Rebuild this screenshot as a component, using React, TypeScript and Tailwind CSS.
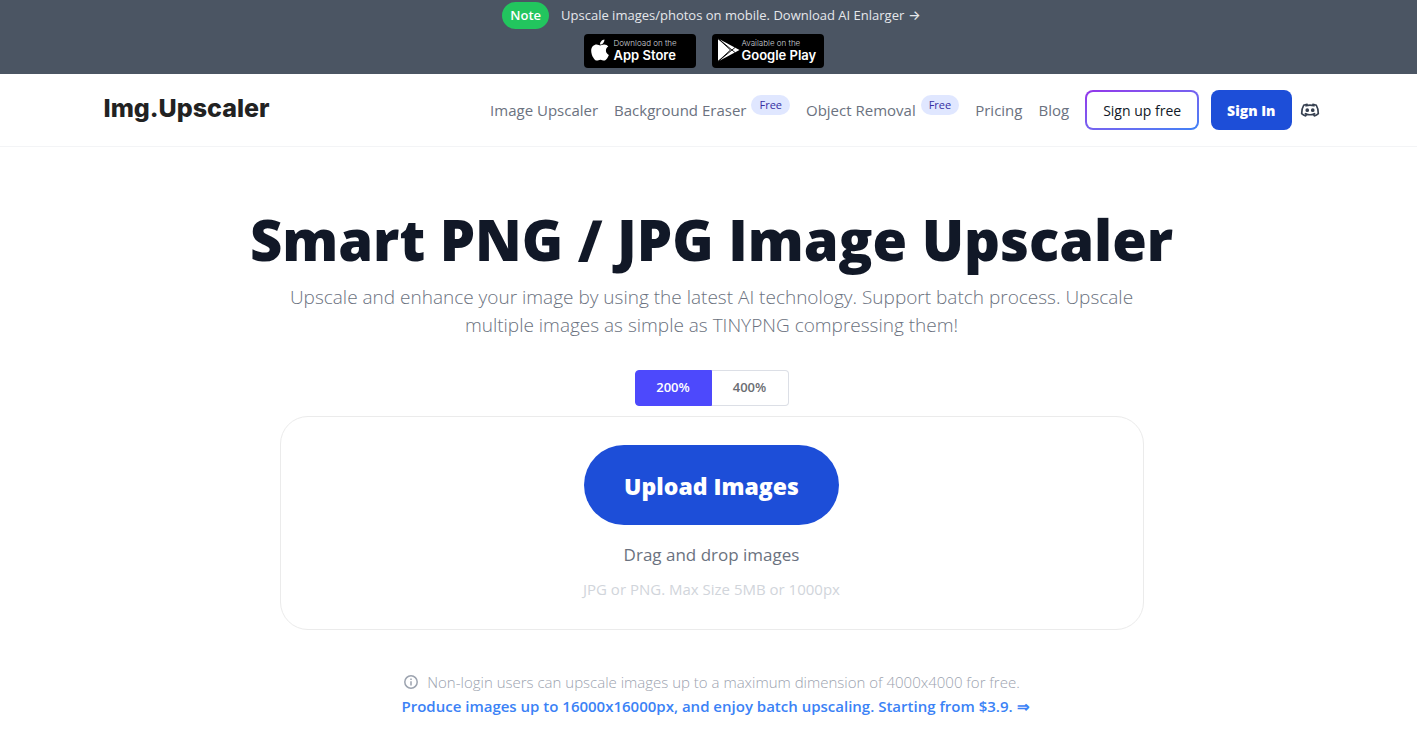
import { useState } from 'react';
import { FaApple } from 'react-icons/fa';
import clsx from 'clsx';

const navItems = [
  { label: 'Image Upscaler', free: false },
  { label: 'Background Eraser', free: true },
  { label: 'Object Removal', free: true },
  { label: 'Pricing', free: false },
  { label: 'Blog', free: false },
];

const scales = ['200%', '400%'];

function PlayIcon() {
  return (
    <svg viewBox="0 0 22 24" className="w-[22px] h-6 shrink-0">
      <path d="M0 0.5v23l21.5-11.5z" fill="#fff" />
      <path d="M0 0.5l17 14M0 23.5L17 9.5M0 0.5l12.5 11.5L0 23.5" stroke="#000" strokeWidth="0.9" fill="none" />
    </svg>
  );
}

function DiscordIcon() {
  return (
    <svg viewBox="0 0 24 24" className="w-5 h-5" fill="none" stroke="currentColor" strokeWidth="2" strokeLinecap="round" strokeLinejoin="round">
      <path d="M8.5 5.2C6.8 5.4 5.4 5.9 4.4 6.4C2.8 9 1.9 12.6 2 16.4C3.4 17.7 5.1 18.6 6.8 19L8 17.2M15.5 5.2C17.2 5.4 18.6 5.9 19.6 6.4C21.2 9 22.1 12.6 22 16.4C20.6 17.7 18.9 18.6 17.2 19L16 17.2" />
      <path d="M6.5 16.4C9.8 18 14.2 18 17.5 16.4M7.2 7C10.2 5.9 13.8 5.9 16.8 7" />
      <circle cx="8.7" cy="12.2" r="1.2" fill="currentColor" />
      <circle cx="15.3" cy="12.2" r="1.2" fill="currentColor" />
    </svg>
  );
}

function Banner() {
  return (
    <div className="bg-[#4b5563] pl-1.5 pt-0.5 pb-1.5">
      <div className="flex items-center justify-center gap-3">
        <span className="h-[27px] flex items-center rounded-full bg-[#22c55e] px-2 text-[13px] font-semibold text-white">Note</span>
        <a href="#mobile" className="flex items-center gap-1 text-[13px] font-medium text-[#e5e7eb]">
          Upscale images/photos on mobile. Download AI Enlarger
          <span className="font-['Inter',sans-serif]">→</span>
        </a>
      </div>
      <div className="flex justify-center gap-4 pt-[5px] pr-4 font-['Inter',sans-serif] text-white">
        <a href="#app-store" className="w-28 h-[34px] flex items-center gap-1 rounded bg-black pl-1.5 pb-0.5">
          <FaApple className="w-5 h-6 shrink-0" />
          <span className="flex flex-col">
            <span className="text-[8px] leading-[10px] font-light text-gray-300">Download on the</span>
            <span className="text-[13px] leading-[14px] font-semibold">App Store</span>
          </span>
        </a>
        <a href="#google-play" className="w-28 h-[34px] flex items-center gap-0.5 rounded bg-black pl-1.5 pb-0.5">
          <PlayIcon />
          <span className="flex flex-col">
            <span className="text-[8px] leading-[10px] font-light text-gray-300">Available on the</span>
            <span className="text-[13px] leading-[14px] font-semibold whitespace-nowrap">Google Play</span>
          </span>
        </a>
      </div>
    </div>
  );
}

function Header() {
  return (
    <header className="border-b border-[#f3f4f6] pl-1.5">
      <div className="max-w-7xl mx-auto px-8 py-4 flex items-center justify-between">
        <a href="#home" className="font-['Inter',sans-serif] text-[25px] leading-8 font-extrabold text-[#222] pb-1">
          Img.Upscaler
        </a>
        <div className="flex items-center">
          <nav className="flex items-center gap-4 text-[15px] text-[#6b7280]">
            {navItems.map((item) => (
              <a key={item.label} href="#nav" className="flex items-center gap-[5px]">
                {item.label}
                {item.free && (
                  <span className="h-5 mb-2.5 flex items-center rounded-full bg-[#e0e7ff] px-2 text-[11px] font-medium text-[#3730a3]">
                    Free
                  </span>
                )}
              </a>
            ))}
          </nav>
          <button className="ml-4 h-10 rounded-lg bg-linear-to-br from-[#9333ea] to-[#3b82f6] p-0.5">
            <span className="h-full flex items-center rounded-md bg-white px-4 text-[14px] font-medium text-[#111827]">Sign up free</span>
          </button>
          <button className="ml-3 h-10 rounded-lg bg-[#1d4ed8] px-4 text-[14px] font-extrabold text-white">Sign In</button>
          <a href="#discord" aria-label="Discord" className="ml-2 text-[#374151]">
            <DiscordIcon />
          </a>
        </div>
      </div>
    </header>
  );
}

function ScaleToggle() {
  const [scale, setScale] = useState(scales[0]);
  return (
    <div className="flex justify-center">
      {scales.map((item) => (
        <button
          key={item}
          onClick={() => setScale(item)}
          className={clsx(
            'h-9 w-[77px] border text-[13px] font-semibold first:rounded-l last:rounded-r',
            item === scale ? 'border-[#4d49fc] bg-[#4d49fc] text-white' : 'border-[#dcdfe6] bg-white text-[#6b6d72] last:border-l-0 first:border-r-0'
          )}
        >
          {item}
        </button>
      ))}
    </div>
  );
}

function InfoIcon() {
  return (
    <svg viewBox="0 0 16 16" className="w-4 h-4" fill="none" stroke="currentColor" strokeWidth="1.5">
      <circle cx="8" cy="8" r="6.2" />
      <path d="M8 7.2V11.4M8 4.6v1.5" />
    </svg>
  );
}

export default function App() {
  return (
    <div className="min-h-screen bg-white font-['Open_Sans','Noto_Sans',sans-serif]">
      <Banner />
      <Header />
      <main className="pl-1.5 pt-[62px] pb-3 text-center">
        <h1 className="text-[56px] leading-[60px] font-extrabold text-[#111827]">Smart PNG / JPG Image Upscaler</h1>
        <p className="max-w-4xl mx-auto mt-3.5 px-4 text-[19px] leading-7 font-light text-[#6b7280]">
          Upscale and enhance your image by using the latest AI technology. Support batch process. Upscale multiple images as simple as TINYPNG compressing them!
        </p>
        <div className="mt-[31px]">
          <ScaleToggle />
        </div>
        <section className="max-w-[864px] mx-auto mt-2.5 rounded-[28px] border border-[#ebebeb] pt-7 pb-7">
          <button className="h-20 rounded-full bg-[#1d4ed8] px-10 pt-0.5 text-[23px] font-extrabold text-white">Upload Images</button>
          <p className="mt-4 text-[17px] leading-7 text-[#6b7280]">Drag and drop images</p>
          <p className="mt-2 text-[15px] leading-6 font-medium text-[#d1d5db]">JPG or PNG. Max Size 5MB or 1000px</p>
        </section>
        <div className="mt-10 text-[15px] leading-6">
          <p className="flex items-center justify-center gap-2 font-light text-[#9ca3af]">
            <InfoIcon />
            Non-login users can upscale images up to a maximum dimension of 4000x4000 for free.
          </p>
          <a href="#pricing" className="ml-2 font-semibold text-[#3b82f6]">
            Produce images up to 16000x16000px, and enjoy batch upscaling. Starting from $3.9. ⇒
          </a>
        </div>
      </main>
    </div>
  );
}
